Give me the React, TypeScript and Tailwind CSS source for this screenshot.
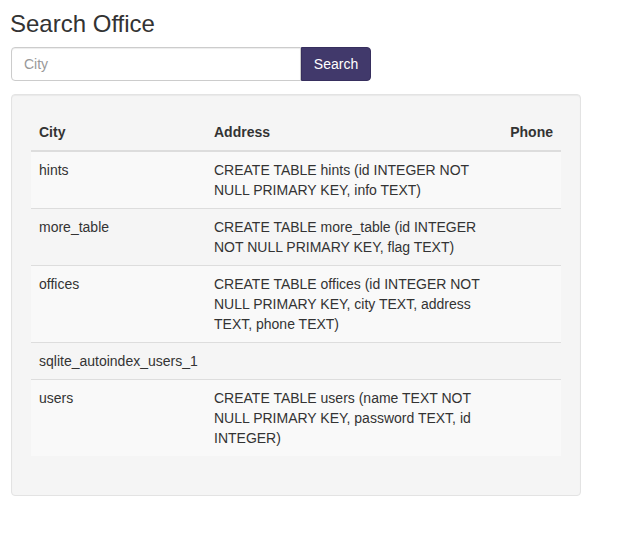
const rows = [
  { city: 'hints', address: 'CREATE TABLE hints (id INTEGER NOT NULL PRIMARY KEY, info TEXT)', phone: '' },
  { city: 'more_table', address: 'CREATE TABLE more_table (id INTEGER NOT NULL PRIMARY KEY, flag TEXT)', phone: '' },
  {
    city: 'offices',
    address: 'CREATE TABLE offices (id INTEGER NOT NULL PRIMARY KEY, city TEXT, address TEXT, phone TEXT)',
    phone: '',
  },
  { city: 'sqlite_autoindex_users_1', address: '', phone: '' },
  {
    city: 'users',
    address: 'CREATE TABLE users (name TEXT NOT NULL PRIMARY KEY, password TEXT, id INTEGER)',
    phone: '',
  },
];

export default function App() {
  return (
    <div className="min-h-[537px] bg-white pt-[11px] pl-[10px] font-['Liberation_Sans',Arial,sans-serif] text-[14px] leading-[20px] text-[#333]">
      <h3 className="mb-[10px] text-[24px] leading-[26.4px] font-normal">Search Office</h3>

      <form className="ml-px flex w-[360px]" onSubmit={(e) => e.preventDefault()}>
        <input
          type="text"
          placeholder="City"
          className="h-[34px] w-[290px] rounded-l-[4px] border border-[#ccc] px-3 py-[6px] text-[14px] text-[#555] shadow-[inset_0_1px_1px_rgba(0,0,0,0.075)] outline-none placeholder:text-[#999]"
        />
        <button
          type="submit"
          className="h-[34px] w-[70px] rounded-r-[4px] border border-[#372f5e] bg-[#41396b] text-[14px] text-white"
        >
          Search
        </button>
      </form>

      <div className="mt-[13px] ml-px w-[570px] rounded-[4px] border border-[#e3e3e3] bg-[#f5f5f5] p-[19px] shadow-[inset_0_1px_1px_rgba(0,0,0,0.05)]">
        <table className="mb-5 w-[530px] table-fixed border-collapse">
          <colgroup>
            <col className="w-[175px]" />
            <col className="w-[296px]" />
            <col className="w-[59px]" />
          </colgroup>
          <thead>
            <tr>
              <th className="border-b-2 border-[#ddd] p-2 text-left font-bold">City</th>
              <th className="border-b-2 border-[#ddd] p-2 text-left font-bold">Address</th>
              <th className="border-b-2 border-[#ddd] p-2 text-right font-bold">Phone</th>
            </tr>
          </thead>
          <tbody>
            {rows.map((row, i) => (
              <tr key={row.city} className={i % 2 === 0 ? 'bg-[#f9f9f9]' : ''}>
                <td className="border-t border-[#ddd] p-2 align-top">{row.city}</td>
                <td className="border-t border-[#ddd] p-2 align-top">{row.address}</td>
                <td className="border-t border-[#ddd] p-2 align-top">{row.phone}</td>
              </tr>
            ))}
          </tbody>
        </table>
      </div>
    </div>
  );
}
